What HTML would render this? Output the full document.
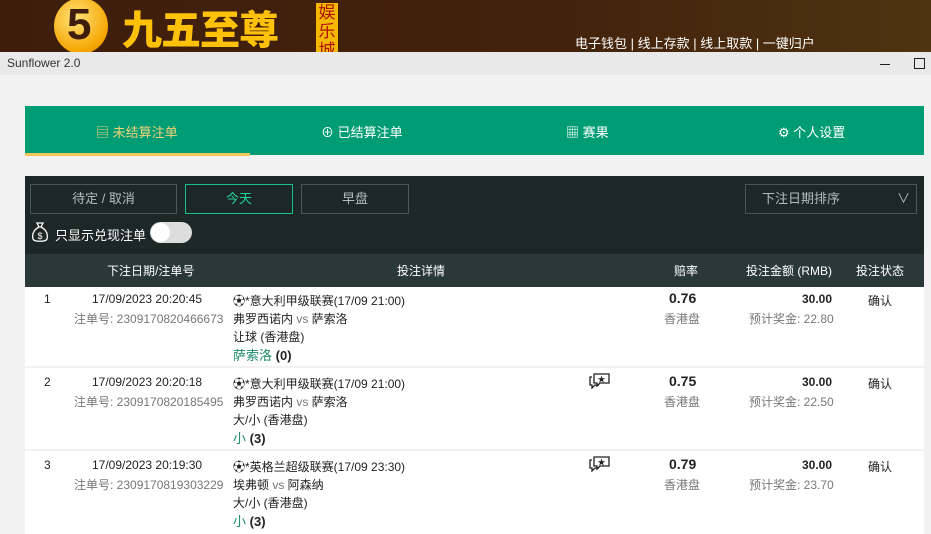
<!DOCTYPE html>
<html><head><meta charset="utf-8"><style>
*{margin:0;padding:0;box-sizing:border-box}
body{width:931px;height:534px;overflow:hidden;background:#f2f2f2;font-family:"Liberation Sans","Noto Sans CJK SC",sans-serif;font-size:12px;position:relative;color:#222}
.a{position:absolute;white-space:nowrap}
.top{left:0;top:0;width:931px;height:52px;background:linear-gradient(90deg,#3e1d0c 0%,#43220c 60%,#4e3410 100%)}
.tb{left:0;top:52px;width:931px;height:23px;background:#e9e9e9}
.tabs{left:25px;top:106px;width:899px;height:49px;background:#009c74}
.tab{top:122px;color:#fff;font-size:13px}
.panel{left:25px;top:176px;width:899px;height:78px;background:#1d2726}
.hdr{left:25px;top:254px;width:899px;height:33px;background:#2a3938;color:#fff}
.btn{top:184px;height:30px;border:1px solid #4a5554;text-align:center;line-height:28px;font-size:13px;color:#b5bcbc}
.row{left:25px;width:899px;background:#fff}
.g{color:#777}
.gr{color:#1f8a6a}
</style></head><body>
<div class="a top"></div>
<div class="a" style="left:54px;top:-2px;width:54px;height:56px;border-radius:50%;background:radial-gradient(circle at 40% 35%,#ffe27a,#f5a500 70%,#c77700);"></div>
<div class="a" style="left:67px;top:0px;font-size:44px;font-weight:bold;color:#3e1d0c;line-height:50px">5</div>
<div class="a" style="left:122px;top:3px;font-size:40px;font-weight:900;color:#ffc10a;line-height:48px;font-family:'Noto Sans CJK SC',sans-serif;letter-spacing:-1px">九五至尊</div>
<div class="a" style="left:316px;top:3px;width:22px;height:49px;background:#f5b800;color:#b0120a;font-size:17px;line-height:19px;text-align:center;white-space:normal;overflow:hidden">娱乐城</div>
<div class="a" style="left:575px;top:33px;color:#fff;font-size:13px">电子钱包 | 线上存款 | 线上取款 | 一键归户</div>
<div class="a tb"></div>
<div class="a" style="left:7px;top:56px;color:#333;font-size:12px">Sunflower 2.0</div>
<div class="a" style="left:880px;top:64px;width:10px;height:1px;background:#222"></div>
<div class="a" style="left:914px;top:58px;width:11px;height:11px;border:1.5px solid #222"></div>
<div class="a tabs"></div>
<div class="a" style="left:25px;top:153px;width:225px;height:3px;background:#f0c65b"></div>
<div class="a tab" style="left:96px;color:#f0d27a">▤ 未结算注单</div>
<div class="a tab" style="left:321px">⊕ 已结算注单</div>
<div class="a tab" style="left:566px">▦ 赛果</div>
<div class="a tab" style="left:778px">⚙ 个人设置</div>
<div class="a panel"></div>
<div class="a btn" style="left:30px;width:147px">待定 / 取消</div>
<div class="a btn" style="left:185px;width:108px;border-color:#17c08c;color:#22d39a">今天</div>
<div class="a btn" style="left:301px;width:108px">早盘</div>
<div class="a btn" style="left:745px;width:172px;text-align:left;padding-left:16px">下注日期排序<span style="position:absolute;right:6px">∨</span></div>
<svg class="a" style="left:30px;top:221px" width="20" height="22" viewBox="0 0 20 22"><path d="M7 2h6l-2 4h-2z M9 6 C3 9 2 14 3 18 C4 21 16 21 17 18 C18 14 17 9 11 6" fill="none" stroke="#fff" stroke-width="1.3"/><text x="10" y="18" font-size="9" fill="#fff" text-anchor="middle" font-family="Liberation Sans">$</text></svg>
<div class="a" style="left:55px;top:225px;color:#fff;font-size:13px">只显示兑现注单</div>
<div class="a" style="left:150px;top:222px;width:42px;height:21px;border-radius:11px;background:#ddd"></div>
<div class="a" style="left:151px;top:223px;width:19px;height:19px;border-radius:50%;background:#fff"></div>
<div class="a hdr"></div>
<div class="a" style="left:107px;top:262px;color:#fff">下注日期/注单号</div>
<div class="a" style="left:397px;top:262px;color:#fff">投注详情</div>
<div class="a" style="left:674px;top:262px;color:#fff">赔率</div>
<div class="a" style="left:746px;top:262px;color:#fff">投注金额 (RMB)</div>
<div class="a" style="left:856px;top:262px;color:#fff">投注状态</div>

<div class="a row" style="top:287px;height:79px"></div>
<div class="a row" style="top:368px;height:81px"></div>
<div class="a row" style="top:451px;height:83px"></div>

<div class="a" style="left:44px;top:292px">1</div>
<div class="a" style="left:92px;top:292px">17/09/2023 20:20:45</div>
<div class="a g" style="left:74px;top:310px">注单号: 2309170820466673</div>
<div class="a" style="left:233px;top:292px">⚽*意大利甲级联赛(17/09 21:00)</div>
<div class="a" style="left:233px;top:310px">弗罗西诺内 <span class="g">vs</span> 萨索洛</div>
<div class="a" style="left:233px;top:328px">让球 (香港盘)</div>
<div class="a" style="left:233px;top:345px;font-size:13px"><span class="gr">萨索洛</span> <b>(0)</b></div>
<div class="a" style="left:669px;top:290px;font-size:14px;font-weight:bold">0.76</div>
<div class="a g" style="left:664px;top:310px">香港盘</div>
<div class="a" style="left:802px;top:292px;font-weight:bold">30.00</div>
<div class="a g" style="left:749px;top:310px">预计奖金: 22.80</div>
<div class="a" style="left:868px;top:292px">确认</div>

<div class="a" style="left:44px;top:375px">2</div>
<div class="a" style="left:92px;top:375px">17/09/2023 20:20:18</div>
<div class="a g" style="left:74px;top:393px">注单号: 2309170820185495</div>
<div class="a" style="left:233px;top:375px">⚽*意大利甲级联赛(17/09 21:00)</div>
<div class="a" style="left:233px;top:393px">弗罗西诺内 <span class="g">vs</span> 萨索洛</div>
<div class="a" style="left:233px;top:411px">大/小 (香港盘)</div>
<div class="a" style="left:233px;top:428px;font-size:13px"><span class="gr">小</span> <b>(3)</b></div>
<svg class="a" style="left:589px;top:373px" width="22" height="16" viewBox="0 0 22 16"><path d="M5 1h15v9h-9l-3 3v-3H5z" fill="none" stroke="#222" stroke-width="1.3"/><path d="M3 4H1v8h2v3l3-3h4" fill="none" stroke="#222" stroke-width="1.3"/><text x="12.5" y="9" font-size="8" text-anchor="middle" fill="#222">★</text></svg>
<div class="a" style="left:669px;top:373px;font-size:14px;font-weight:bold">0.75</div>
<div class="a g" style="left:664px;top:393px">香港盘</div>
<div class="a" style="left:802px;top:375px;font-weight:bold">30.00</div>
<div class="a g" style="left:749px;top:393px">预计奖金: 22.50</div>
<div class="a" style="left:868px;top:375px">确认</div>

<div class="a" style="left:44px;top:458px">3</div>
<div class="a" style="left:92px;top:458px">17/09/2023 20:19:30</div>
<div class="a g" style="left:74px;top:476px">注单号: 2309170819303229</div>
<div class="a" style="left:233px;top:458px">⚽*英格兰超级联赛(17/09 23:30)</div>
<div class="a" style="left:233px;top:476px">埃弗顿 <span class="g">vs</span> 阿森纳</div>
<div class="a" style="left:233px;top:494px">大/小 (香港盘)</div>
<div class="a" style="left:233px;top:511px;font-size:13px"><span class="gr">小</span> <b>(3)</b></div>
<svg class="a" style="left:589px;top:456px" width="22" height="16" viewBox="0 0 22 16"><path d="M5 1h15v9h-9l-3 3v-3H5z" fill="none" stroke="#222" stroke-width="1.3"/><path d="M3 4H1v8h2v3l3-3h4" fill="none" stroke="#222" stroke-width="1.3"/><text x="12.5" y="9" font-size="8" text-anchor="middle" fill="#222">★</text></svg>
<div class="a" style="left:669px;top:456px;font-size:14px;font-weight:bold">0.79</div>
<div class="a g" style="left:664px;top:476px">香港盘</div>
<div class="a" style="left:802px;top:458px;font-weight:bold">30.00</div>
<div class="a g" style="left:749px;top:476px">预计奖金: 23.70</div>
<div class="a" style="left:868px;top:458px">确认</div>
</body></html>
